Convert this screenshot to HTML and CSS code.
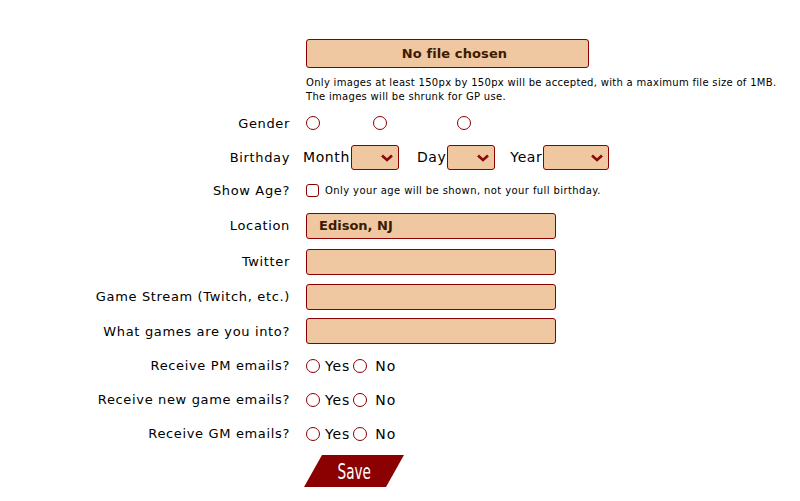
FILE: index.html
```html
<!DOCTYPE html>
<html>
<head>
<meta charset="utf-8">
<link rel="stylesheet" href="styles.css">
</head>
<body>
<form class="form">
  <div class="row file-row">
    <div class="label"></div>
    <div class="field">
      <div class="file-btn">No file chosen</div>
      <p class="help">Only images at least 150px by 150px will be accepted, with a maximum file size of 1MB.<br>The images will be shrunk for GP use.</p>
    </div>
  </div>
  <div class="row r-gender">
    <div class="label">Gender</div>
    <div class="field gender">
      <input type="radio" name="g" class="radio">
      <input type="radio" name="g" class="radio">
      <input type="radio" name="g" class="radio">
    </div>
  </div>
  <div class="row r-birth">
    <div class="label">Birthday</div>
    <div class="field birthday">
      <span class="blabel">Month</span>
      <span class="sel w48"><svg viewBox="0 0 14 10" class="chev"><path d="M2 2.5 L7 7 L12 2.5" fill="none" stroke="#8a0a0a" stroke-width="2.6"/></svg></span>
      <span class="blabel day">Day</span>
      <span class="sel w48"><svg viewBox="0 0 14 10" class="chev"><path d="M2 2.5 L7 7 L12 2.5" fill="none" stroke="#8a0a0a" stroke-width="2.6"/></svg></span>
      <span class="blabel year">Year</span>
      <span class="sel w66"><svg viewBox="0 0 14 10" class="chev"><path d="M2 2.5 L7 7 L12 2.5" fill="none" stroke="#8a0a0a" stroke-width="2.6"/></svg></span>
    </div>
  </div>
  <div class="row r-show">
    <div class="label">Show Age?</div>
    <div class="field">
      <input type="checkbox" class="check">
      <span class="small">Only your age will be shown, not your full birthday.</span>
    </div>
  </div>
  <div class="row r-loc">
    <div class="label">Location</div>
    <div class="field"><div class="text">Edison, NJ</div></div>
  </div>
  <div class="row r-tw">
    <div class="label">Twitter</div>
    <div class="field"><div class="text"></div></div>
  </div>
  <div class="row r-gs">
    <div class="label">Game Stream (Twitch, etc.)</div>
    <div class="field"><div class="text"></div></div>
  </div>
  <div class="row r-wg">
    <div class="label">What games are you into?</div>
    <div class="field"><div class="text"></div></div>
  </div>
  <div class="row r-pm">
    <div class="label">Receive PM emails?</div>
    <div class="field yn">
      <input type="radio" name="pm" class="radio"><span class="opt">Yes</span>
      <input type="radio" name="pm" class="radio"><span class="opt no">No</span>
    </div>
  </div>
  <div class="row r-ng">
    <div class="label">Receive new game emails?</div>
    <div class="field yn">
      <input type="radio" name="ng" class="radio"><span class="opt">Yes</span>
      <input type="radio" name="ng" class="radio"><span class="opt no">No</span>
    </div>
  </div>
  <div class="row r-gm">
    <div class="label">Receive GM emails?</div>
    <div class="field yn">
      <input type="radio" name="gm" class="radio"><span class="opt">Yes</span>
      <input type="radio" name="gm" class="radio"><span class="opt no">No</span>
    </div>
  </div>
  <div class="row save-row">
    <div class="label"></div>
    <div class="field"><div class="save"><span>Save</span></div></div>
  </div>
</form>
</body>
</html>
```
FILE: styles.css
```css
html, body {
  margin: 0;
  padding: 0;
  background: #ffffff;
}
body {
  font-family: "DejaVu Sans", Verdana, sans-serif;
  font-size: 13px;
  color: #000;
  letter-spacing: 0.65px;
}
.form {
  padding-top: 39px;
}
.row {
  display: grid;
  grid-template-columns: 290px 1fr;
  column-gap: 16px;
  align-items: center;
  height: 34px;
}
.r-show { height: 33px; }
.r-loc { height: 37px; }
.r-tw, .r-gs { height: 35px; }
.r-wg { height: 34px; }
.r-pm { height: 35px; }
.r-ng { height: 33px; }
.r-gm { height: 35px; }
.file-row {
  height: auto;
  align-items: start;
  margin-bottom: 2px;
}
.label {
  text-align: right;
  white-space: nowrap;
}
.field {
  display: flex;
  align-items: center;
}
.file-row .field {
  display: block;
}
.file-btn {
  box-sizing: border-box;
  width: 283px;
  height: 29px;
  background: #efc7a1;
  border: 1.5px solid #8b0000;
  border-radius: 3px;
  color: #3d1a00;
  font-weight: bold;
  text-align: center;
  line-height: 28px;
  letter-spacing: 0.1px;
  padding-left: 14px;
}
.help {
  margin: 8px 0 0;
  font-size: 10px;
  line-height: 14px;
  letter-spacing: 0.3px;
}
.radio, .check {
  -webkit-appearance: none;
  appearance: none;
  margin: 0;
  box-sizing: border-box;
  width: 14px;
  height: 14px;
  border: 1.5px solid #8b0000;
  background: #fff;
}
.radio { border-radius: 50%; }
.check { border-radius: 3px; width: 13px; height: 13px; }
.gender .radio:nth-child(2) { margin-left: 53px; }
.gender .radio:nth-child(3) { margin-left: 70px; }
.birthday .blabel { font-size: 14px; letter-spacing: 0.6px; margin-left: -3px; margin-right: 1px; }
.birthday .day { margin-left: 18px; }
.birthday .year { margin-left: 15px; }
.sel {
  position: relative;
  box-sizing: border-box;
  height: 25px;
  background: #efc7a1;
  border: 1.5px solid #8b0000;
  border-radius: 3px;
}
.w48 { width: 48px; }
.w66 { width: 66px; }
.chev {
  position: absolute;
  right: 4px;
  top: 7px;
  width: 14px;
  height: 10px;
}
.small {
  font-size: 10px;
  letter-spacing: 0.4px;
  margin-left: 6px;
}
.text {
  box-sizing: border-box;
  width: 250px;
  height: 26px;
  background: #efc7a1;
  border: 1.5px solid #8b0000;
  border-radius: 3px;
  color: #3d1a00;
  font-weight: bold;
  letter-spacing: 0;
  padding-left: 12px;
  line-height: 23px;
}
.opt { font-size: 14px; letter-spacing: 0.9px; margin-left: 5px; margin-right: 3px; }
.opt.no { margin-left: 8px; }
.save-row { height: 40px; margin-top: 0; }
.save {
  width: 100px;
  height: 32px;
  background: #8b0000;
  clip-path: polygon(18% 0, 100% 0, 82% 100%, 0 100%);
  display: flex;
  align-items: center;
  justify-content: center;
  margin-left: -2px;
}
.save span {
  color: #fff;
  font-family: "DejaVu Sans Condensed", "DejaVu Sans", sans-serif;
  font-size: 21px;
  letter-spacing: 0;
  transform: scaleX(0.72);
  display: inline-block;
  padding-top: 2px;
}
```
